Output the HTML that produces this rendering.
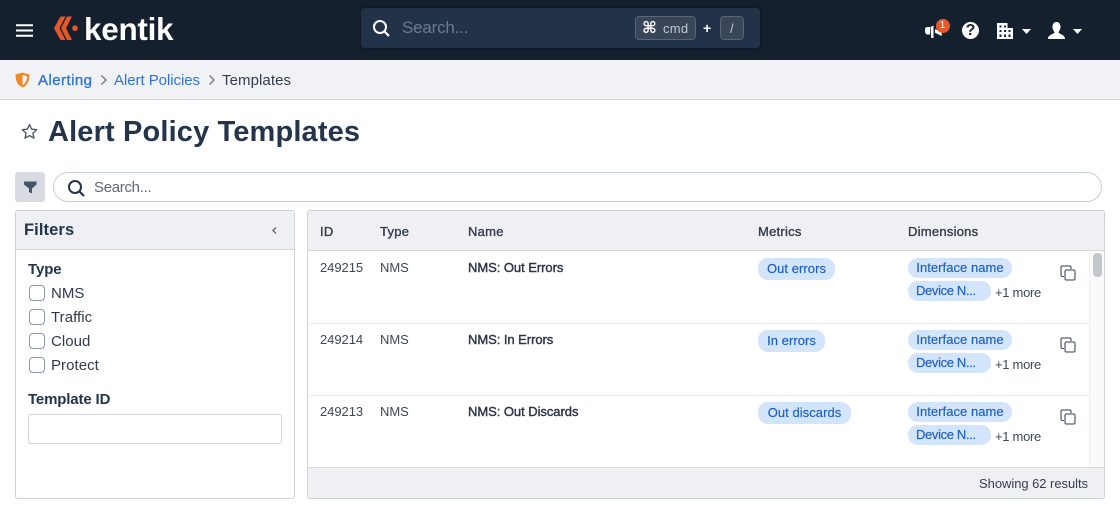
<!DOCTYPE html>
<html><head><meta charset="utf-8">
<style>
*{box-sizing:border-box}
html,body{margin:0;padding:0;width:1120px;height:524px;overflow:hidden;background:#fff;font-family:"Liberation Sans",sans-serif;color:#2a3648}
.a{position:absolute}
.t{position:absolute;white-space:nowrap;line-height:1}
.hd{font-size:13px;color:#2f3b4c;letter-spacing:.25px;-webkit-text-stroke:.35px #2f3b4c}
.c{font-size:13px;color:#3c4757;letter-spacing:-.05px}
.n{font-size:13px;color:#2a3648;letter-spacing:-.05px;-webkit-text-stroke:.4px #2a3648}
.p{position:absolute;height:20px;border-radius:10px;background:#d3e5fa;color:#1d5fc4;font-size:13px;line-height:20px;white-space:nowrap;letter-spacing:.05px;text-align:center;-webkit-text-stroke:.15px #1d5fc4}
.d{width:83px;text-align:left;padding-left:8px;letter-spacing:-.35px}
.more{font-size:13px;color:#3c4757;letter-spacing:-.3px}
.cb{position:absolute;left:29px;width:16px;height:16px;border:1.5px solid #8e98a8;border-radius:4px;background:#fff}
.lb{font-size:15px;color:#2f3b4c;letter-spacing:.05px}
.line{position:absolute;left:309px;width:780px;height:1px;background:#e4e6ea}
</style></head><body>
<div class="a" style="left:0;top:0;width:1120px;height:60px;background:#15202e"></div>
<svg class="a" style="left:16px;top:24px" width="18" height="13" viewBox="0 0 18 13"><path d="M0 1.200H17M0 6.500H17M0 11.800H17" stroke="#fff" stroke-width="2"/></svg>
<svg class="a" style="left:53px;top:14px" width="27" height="28" viewBox="0 0 27 28"><path d="M7.500 2.500H12.500L6.500 14.200 12.500 26H7.500L1 14.200z" fill="#e5582a"/><path d="M14 2.500H19L13 14.200 19 26H14L8 14.200z" fill="#e5582a"/><circle cx="22" cy="14.200" r="2.800" fill="#e5582a"/></svg>
<div class="t" style="left:84px;top:11px;font-size:31.500px;font-weight:bold;color:#fff;letter-spacing:-.3px;line-height:36px">kentik</div>

<div class="a" style="left:361px;top:8px;width:399px;height:40px;background:#213249;border-radius:4px;box-shadow:0 0 2px #0a0f16"></div>
<svg class="a" style="left:372px;top:19px" width="18" height="18" viewBox="0 0 18 18"><circle cx="8" cy="8" r="6" fill="none" stroke="#fff" stroke-width="2"/><path d="M12.500 12.500L17 17" stroke="#fff" stroke-width="2.200"/></svg>
<div class="t" style="left:402px;top:19px;font-size:17px;color:#6f7a89;letter-spacing:-.2px">Search...</div>
<div class="a" style="left:635px;top:16px;width:61px;height:24px;background:#39465a;border:1px solid #5a6575;border-radius:4px"></div>
<div class="t" style="left:642px;top:19px;font-size:16px;font-weight:bold;color:#fff;line-height:18px;font-family:'DejaVu Sans',sans-serif">⌘</div>
<div class="t" style="left:663px;top:22px;font-size:13px;color:#c5cad1;letter-spacing:.3px">cmd</div>
<div class="t" style="left:703px;top:21px;font-size:14px;font-weight:bold;color:#fff">+</div>
<div class="a" style="left:720px;top:16px;width:24px;height:24px;background:#39465a;border:1px solid #5a6575;border-radius:4px"></div>
<div class="t" style="left:730px;top:22px;font-size:13px;color:#c5cad1">/</div>

<svg class="a" style="left:924px;top:22px" width="20" height="18" viewBox="0 0 20 18"><path d="M3 5H6V12.500H3.500C2 12.500 1 11 1 9V7.500C1 6 2 5 3 5z" fill="#fff"/><path d="M6.500 5L9.500 3.500V16H7.200z" fill="#fff"/><path d="M11 7.300L17.700 9.300V14L11 10.700z" fill="#fff"/></svg>
<div class="a" style="left:935.500px;top:18.500px;width:14px;height:14px;border-radius:50%;background:#e5582a"></div>
<div class="t" style="left:935.500px;top:20.500px;width:14px;text-align:center;font-size:10px;color:#fff">1</div>
<div class="a" style="left:962px;top:22px;width:17px;height:17px;border-radius:50%;background:#fff"></div>
<div class="t" style="left:962px;top:23px;width:17px;text-align:center;font-size:16px;font-weight:bold;color:#15202e">?</div>
<svg class="a" style="left:997px;top:22.500px" width="16" height="16" viewBox="0 0 16 16"><path d="M0 0H10.500V5H16V16H0z" fill="#fff"/><path d="M2.500 2.500h2v2h-2zM7 2.500h2v2H7zM2.500 7h2v2h-2zM7 7h2v2H7zM11.500 7h2v2h-2zM2.500 11.500h2V14h-2zM7 11.500h2V14H7zM11.500 11.500h2V14h-2z" fill="#15202e"/></svg>
<svg class="a" style="left:1022px;top:29px" width="9" height="5" viewBox="0 0 9 5"><path d="M0 0H9L4.500 5z" fill="#fff"/></svg>
<svg class="a" style="left:1048px;top:22px" width="17" height="17" viewBox="0 0 17 17"><path d="M8.500 0C11.500 0 12.500 2.500 12.500 5S11 9 10.500 10.500C11 12 17 12.500 17 17H0C0 12.500 6 12 6.500 10.500 6 9 4.500 7.500 4.500 5S5.500 0 8.500 0z" fill="#fff"/></svg>
<svg class="a" style="left:1073px;top:29px" width="9" height="5" viewBox="0 0 9 5"><path d="M0 0H9L4.500 5z" fill="#fff"/></svg>

<div class="a" style="left:0;top:60px;width:1120px;height:40px;background:#f1f2f5;border-bottom:1px solid #d5d7db"></div>
<svg class="a" style="left:15px;top:72px" width="15" height="16" viewBox="0 0 15 16"><path d="M7.500 0.500L14.500 2.500C14.500 8 13 13 7.500 15.500 2 13 .5 8 .5 2.500z" fill="#f08a24"/><path d="M7.500 3L12 4.200C12 8 11 11 7.500 13z" fill="#f1f2f5"/></svg>
<div class="t" style="left:38px;top:73px;font-size:15px;color:#2f74d6;letter-spacing:.45px;-webkit-text-stroke:.35px #2f74d6">Alerting</div>
<svg class="a" style="left:100px;top:74px" width="8" height="12" viewBox="0 0 8 12"><path d="M1.500 1.500L6 6 1.500 10.500" fill="none" stroke="#6b7482" stroke-width="1.300"/></svg>
<div class="t" style="left:114px;top:73px;font-size:15px;color:#2f74d6;letter-spacing:-.05px">Alert Policies</div>
<svg class="a" style="left:208px;top:74px" width="8" height="12" viewBox="0 0 8 12"><path d="M1.500 1.500L6 6 1.500 10.500" fill="none" stroke="#6b7482" stroke-width="1.300"/></svg>
<div class="t" style="left:222px;top:73px;font-size:15px;color:#333e4e;letter-spacing:.08px">Templates</div>

<svg class="a" style="left:21px;top:123px" width="17" height="17" viewBox="0 0 17 17"><path d="M8.500 1.500L10.600 6.200 15.700 6.700 11.900 10.100 13 15.200 8.500 12.600 4 15.200 5.100 10.100 1.300 6.700 6.400 6.200z" fill="none" stroke="#4a5462" stroke-width="1.300" stroke-linejoin="round"/></svg>
<div class="t" style="left:48px;top:116px;font-size:29px;font-weight:bold;color:#24344a;letter-spacing:.15px;line-height:32px">Alert Policy Templates</div>

<div class="a" style="left:15px;top:172px;width:30px;height:30px;background:#d8dce2;border-radius:3px"></div>
<svg class="a" style="left:24px;top:181px" width="13" height="13" viewBox="0 0 13 13"><path d="M0 0.500H12.500V3.500L8 7.500V12.500L5 11V7.500L0 3.500z" fill="#465468"/></svg>
<div class="a" style="left:53px;top:172px;width:1049px;height:30px;border:1px solid #c9ced4;border-radius:15px;background:#fff"></div>
<svg class="a" style="left:67px;top:179px" width="18" height="18" viewBox="0 0 18 18"><circle cx="8" cy="8" r="6" fill="none" stroke="#24344a" stroke-width="2"/><path d="M12.500 12.500L17 17" stroke="#24344a" stroke-width="2.200"/></svg>
<div class="t" style="left:94px;top:180px;font-size:15px;color:#5f6a79;letter-spacing:-.3px">Search...</div>

<!-- Filters -->
<div class="a" style="left:15px;top:210px;width:280px;height:289px;border:1px solid #cdd0d5;border-radius:3px;background:#fff"></div>
<div class="a" style="left:16px;top:211px;width:278px;height:39px;background:#eff0f3;border-bottom:1px solid #d5d7db;border-radius:3px 3px 0 0"></div>
<div class="t" style="left:24px;top:222px;font-size:16.500px;font-weight:bold;color:#24344a;letter-spacing:.1px">Filters</div>
<svg class="a" style="left:271px;top:226px" width="7" height="9" viewBox="0 0 7 9"><path d="M5 1.500L2 4.500 5 7.500" fill="none" stroke="#4a5462" stroke-width="1.200"/></svg>
<div class="t" style="left:28px;top:262px;font-size:15px;font-weight:bold;color:#24344a;letter-spacing:-.1px">Type</div>
<div class="cb" style="top:285px"></div><div class="t lb" style="left:51px;top:286px">NMS</div>
<div class="cb" style="top:309px"></div><div class="t lb" style="left:51px;top:310px">Traffic</div>
<div class="cb" style="top:333px"></div><div class="t lb" style="left:51px;top:334px">Cloud</div>
<div class="cb" style="top:357px"></div><div class="t lb" style="left:51px;top:358px">Protect</div>
<div class="t" style="left:28px;top:392px;font-size:15px;font-weight:bold;color:#24344a;letter-spacing:-.15px">Template ID</div>
<div class="a" style="left:28px;top:414px;width:254px;height:30px;border:1px solid #cfd2d7;border-radius:3px;background:#fff"></div>

<!-- Table -->
<div class="a" style="left:307px;top:210px;width:798px;height:289px;border:1px solid #cdd0d5;border-radius:3px;background:#fff"></div>
<div class="a" style="left:308px;top:211px;width:796px;height:40px;background:#eff0f3;border-bottom:1px solid #d5d7db;border-radius:3px 3px 0 0"></div>
<div class="a" style="left:1089px;top:251px;width:15px;height:216px;background:#fafafa;border-left:1px solid #eceef0"></div>
<div class="a" style="left:1093px;top:253px;width:9px;height:24px;background:#c3c6ca;border-radius:4px"></div>
<div class="a" style="left:308px;top:467px;width:796px;height:31px;background:#eff0f3;border-top:1px solid #d5d7db;border-radius:0 0 3px 3px"></div>
<div class="t" style="right:32px;top:477px;font-size:13px;color:#333e4e;letter-spacing:-.05px">Showing 62 results</div>
<div class="t hd" style="left:320px;top:225px">ID</div>
<div class="t hd" style="left:380px;top:225px">Type</div>
<div class="t hd" style="left:468px;top:225px">Name</div>
<div class="t hd" style="left:758px;top:225px">Metrics</div>
<div class="t hd" style="left:908px;top:225px">Dimensions</div>
<div class="line" style="top:323px"></div>
<div class="line" style="top:395px"></div>

<div class="t c" style="left:320px;top:261px">249215</div>
<div class="t c" style="left:380px;top:261px">NMS</div>
<div class="t n" style="left:468px;top:261px">NMS: Out Errors</div>
<div class="p" style="left:758px;top:258px;width:77px;height:22px;line-height:22px">Out errors</div>
<div class="p" style="left:908px;top:258px;width:104px">Interface name</div>
<div class="p d" style="left:908px;top:281px">Device N...</div>
<div class="t more" style="left:995px;top:286px">+1 more</div>
<svg class="a" style="left:1060px;top:265px" width="16" height="16" viewBox="0 0 16 16"><path d="M4 11.500H2.500C1.500 11.500 1 11 1 10V2.500C1 1.500 1.500 1 2.500 1H9.500C10.500 1 11 1.500 11 2.500V4" fill="none" stroke="#5a6472" stroke-width="1.300"/><rect x="5" y="5" width="10" height="10" rx="1.500" fill="none" stroke="#5a6472" stroke-width="1.300"/></svg>

<div class="t c" style="left:320px;top:333px">249214</div>
<div class="t c" style="left:380px;top:333px">NMS</div>
<div class="t n" style="left:468px;top:333px">NMS: In Errors</div>
<div class="p" style="left:758px;top:330px;width:67px;height:22px;line-height:22px">In errors</div>
<div class="p" style="left:908px;top:330px;width:104px">Interface name</div>
<div class="p d" style="left:908px;top:353px">Device N...</div>
<div class="t more" style="left:995px;top:358px">+1 more</div>
<svg class="a" style="left:1060px;top:337px" width="16" height="16" viewBox="0 0 16 16"><path d="M4 11.500H2.500C1.500 11.500 1 11 1 10V2.500C1 1.500 1.500 1 2.500 1H9.500C10.500 1 11 1.500 11 2.500V4" fill="none" stroke="#5a6472" stroke-width="1.300"/><rect x="5" y="5" width="10" height="10" rx="1.500" fill="none" stroke="#5a6472" stroke-width="1.300"/></svg>

<div class="t c" style="left:320px;top:405px">249213</div>
<div class="t c" style="left:380px;top:405px">NMS</div>
<div class="t n" style="left:468px;top:405px">NMS: Out Discards</div>
<div class="p" style="left:758px;top:402px;width:93px;height:22px;line-height:22px">Out discards</div>
<div class="p" style="left:908px;top:402px;width:104px">Interface name</div>
<div class="p d" style="left:908px;top:425px">Device N...</div>
<div class="t more" style="left:995px;top:430px">+1 more</div>
<svg class="a" style="left:1060px;top:409px" width="16" height="16" viewBox="0 0 16 16"><path d="M4 11.500H2.500C1.500 11.500 1 11 1 10V2.500C1 1.500 1.500 1 2.500 1H9.500C10.500 1 11 1.500 11 2.500V4" fill="none" stroke="#5a6472" stroke-width="1.300"/><rect x="5" y="5" width="10" height="10" rx="1.500" fill="none" stroke="#5a6472" stroke-width="1.300"/></svg>
</body></html>
